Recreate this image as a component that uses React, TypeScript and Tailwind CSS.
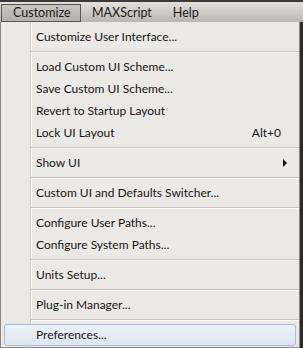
import React from 'react';

type Entry = { label?: string; shortcut?: string; submenu?: boolean; active?: boolean; sep?: boolean };

const entries: Entry[] = [
  { label: 'Customize User Interface...' },
  { sep: true },
  { label: 'Load Custom UI Scheme...' },
  { label: 'Save Custom UI Scheme...' },
  { label: 'Revert to Startup Layout' },
  { label: 'Lock UI Layout', shortcut: 'Alt+0' },
  { sep: true },
  { label: 'Show UI', submenu: true },
  { sep: true },
  { label: 'Custom UI and Defaults Switcher...' },
  { sep: true },
  { label: 'Configure User Paths...' },
  { label: 'Configure System Paths...' },
  { sep: true },
  { label: 'Units Setup...' },
  { sep: true },
  { label: 'Plug-in Manager...' },
  { sep: true },
  { label: 'Preferences...', active: true },
];

function MenuRow({ e }: { e: Entry }) {
  if (e.sep) {
    return (
      <div className="h-2 flex flex-col justify-center pl-[30px]">
        <div className="h-px bg-[#c9c6c2]" />
        <div className="h-px bg-[#fbfbfa]" />
      </div>
    );
  }
  return (
    <div className="h-[22px] px-[3px]">
      <div
        className={
          'h-full flex items-center rounded-[3px] border ' +
          (e.active
            ? 'border-[#aabcd3] bg-gradient-to-b from-[#eef2f8] to-[#dce5f0]'
            : 'border-transparent')
        }
      >
        <span className="pl-[31px] flex-1 text-[12px] text-[#151515]">{e.label}</span>
        {e.shortcut && <span className="pr-[14px] text-[12px] text-[#151515]">{e.shortcut}</span>}
        {e.submenu && (
          <svg width="5" height="8" viewBox="0 0 5 8" className="mr-[7px]">
            <path d="M0 0 L4 4 L0 8 Z" fill="#111" />
          </svg>
        )}
      </div>
    </div>
  );
}

export default function App() {
  return (
    <div className="w-[303px] h-[348px] overflow-hidden bg-[#2c2b2a]" style={{ fontFamily: 'Lato, "Open Sans", sans-serif' }}>
      <div className="h-[22px] border-t-2 border-[#3a3938] bg-gradient-to-b from-[#e3e1de] to-[#b9b6b2] flex items-end">
        <div className="h-[18px] w-[80px] ml-px border border-[#555] bg-gradient-to-b from-[#c9c6c2] to-[#b4b1ad] flex items-center pl-[11px] text-[12.5px] text-[#1a1a1a]">
          Customize
        </div>
        <div className="h-[18px] flex items-center ml-[11px] text-[12.5px] text-[#1a1a1a]">MAXScript</div>
        <div className="h-[18px] flex items-center ml-[21px] text-[12.5px] text-[#1a1a1a]">Help</div>
      </div>
      <div className="w-[300px] h-[326px] border border-[#8a8886] border-t-0 bg-[#ebe9e6] relative pt-[4px]">
        <div className="absolute left-[29px] top-0 bottom-0 w-px bg-[#d0cdc9]" />
        <div className="absolute left-[30px] top-0 bottom-0 w-px bg-[#fbfaf9]" />
        <div className="relative">
          {entries.map((e, i) => (
            <MenuRow key={i} e={e} />
          ))}
        </div>
      </div>
    </div>
  );
}
